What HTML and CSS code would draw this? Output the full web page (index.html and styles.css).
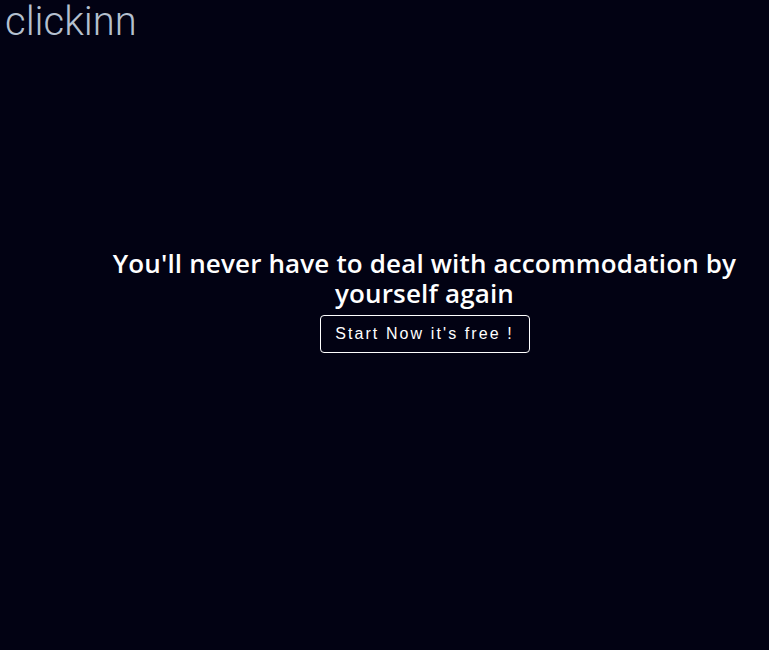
FILE: index.html
```html
<!DOCTYPE html>
<html>
<head>
<meta charset="utf-8">
<link rel="stylesheet" href="styles.css">
</head>
<body>
<header class="top">
  <div class="logo">clickinn</div>
</header>
<main class="hero">
  <h1 class="title">You'll never have to deal with accommodation by yourself again</h1>
  <button class="cta">Start Now it's free !</button>
</main>
</body>
</html>
```
FILE: styles.css
```css
html, body {
  margin: 0;
  padding: 0;
  background: #020213;
  height: 100%;
}
body {
  font-family: "Open Sans", "Noto Sans", sans-serif;
}
.top {
  padding: 0 0 0 5px;
}
.logo {
  font-family: Roboto, sans-serif;
  font-weight: 300;
  font-size: 40px;
  line-height: 44px;
  color: #b4c0cf;
}
.hero {
  display: flex;
  flex-direction: column;
  align-items: center;
  padding: 204px 20px 0 100px;
}
.title {
  margin: 0;
  color: #ffffff;
  font-size: 26px;
  font-weight: 600;
  line-height: 30px;
  letter-spacing: 0.15px;
  text-align: center;
  max-width: 640px;
}
.cta {
  margin-top: 7px;
  background: transparent;
  border: 1px solid #ffffff;
  border-radius: 4px;
  color: #ffffff;
  font-family: "Liberation Sans", Arial, sans-serif;
  font-size: 16px;
  letter-spacing: 2.1px;
  padding: 0;
  height: 38px;
  width: 210px;
}
```
